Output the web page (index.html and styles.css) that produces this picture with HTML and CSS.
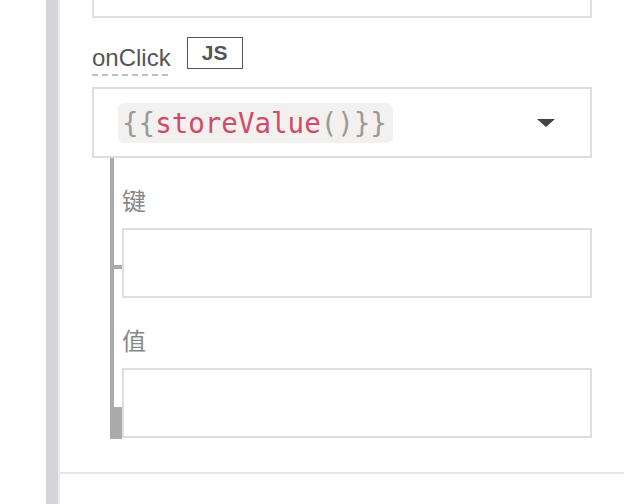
FILE: index.html
```html
<!DOCTYPE html>
<html lang="zh">
<head>
<meta charset="utf-8">
<link rel="stylesheet" href="styles.css">
</head>
<body>
<div class="page">
  <div class="rail"></div>
  <div class="panel">
    <div class="section">
      <div class="prev-box"></div>
      <div class="field-head">
        <span class="field-label">onClick</span>
        <span class="js-btn">JS</span>
      </div>
      <div class="dropdown">
        <span class="code"><span class="brace">{{</span><span class="fn">storeValue</span><span class="brace">()}}</span></span>
        <span class="caret"></span>
      </div>
      <div class="params">
        <div class="param param-key">
          <div class="param-label">键</div>
          <div class="param-input"></div>
        </div>
        <div class="param param-value">
          <div class="param-label">值</div>
          <div class="param-input"></div>
        </div>
      </div>
    </div>
  </div>
</div>
</body>
</html>
```

FILE: styles.css
```css
html, body {
  margin: 0;
  padding: 0;
  background: #ffffff;
}

.page {
  display: flex;
  width: 634px;
  height: 504px;
  overflow: hidden;
}

.rail {
  width: 12px;
  margin-left: 46px;
  background: #d4d4d9;
  border-right: 2px solid #ebebeb;
  flex-shrink: 0;
}

.panel {
  width: 564px;
  flex-shrink: 0;
}

.section {
  padding: 0 32px 34px 32px;
  border-bottom: 2px solid #e6e6e6;
}

.prev-box {
  height: 30px;
  margin-top: -16px;
  width: 496px;
  border: 2px solid #dedede;
}

.field-head {
  display: flex;
  align-items: flex-start;
  gap: 16px;
  margin-top: 19px;
  height: 38px;
}

.field-label {
  margin-top: 7px;
  font-family: "Liberation Sans", Arial, sans-serif;
  font-size: 24px;
  line-height: 28px;
  color: #555555;
  padding-bottom: 2px;
  background-image: repeating-linear-gradient(to right, #b7c0cb 0, #b7c0cb 6px, transparent 6px, transparent 10px);
  background-size: 100% 2px;
  background-repeat: no-repeat;
  background-position: left bottom;
  height: 30px;
}

.js-btn {
  width: 54px;
  height: 30px;
  border: 1px solid #555555;
  display: flex;
  align-items: center;
  justify-content: center;
  font-family: "Liberation Sans", Arial, sans-serif;
  font-weight: bold;
  font-size: 21px;
  color: #555555;
}

.dropdown {
  margin-top: 12px;
  width: 472px;
  height: 67px;
  border: 2px solid #dedede;
  display: flex;
  align-items: center;
  padding-left: 24px;
}

.code {
  background: #f2f1ef;
  border-radius: 6px;
  height: 40px;
  line-height: 40px;
  padding: 0 6px 0 4px;
  font-family: "DejaVu Sans Mono", monospace;
  font-size: 27.5px;
}

.brace {
  color: #9a9a9a;
}

.fn {
  color: #cf4c66;
}

.caret {
  margin-left: auto;
  margin-right: 35px;
  width: 0;
  height: 0;
  border-left: 9px solid transparent;
  border-right: 9px solid transparent;
  border-top: 8px solid #444444;
}

.params {
  margin-left: 18px;
  border-left: 4px solid #aaaaaa;
  padding-left: 8px;
}

.param {
  position: relative;
}

.param-label {
  padding-top: 24px;
  margin-bottom: 10px;
  font-family: "Noto Sans CJK SC", sans-serif;
  font-size: 24px;
  line-height: 36px;
  height: 36px;
  color: #888888;
}

.param-input {
  height: 66px;
  border: 2px solid #dedede;
}

.param-key .param-input {
  position: relative;
}

.param-key .param-input::before {
  content: "";
  position: absolute;
  left: -10px;
  top: 35px;
  width: 8px;
  height: 4px;
  background: #aaaaaa;
}

.param-value::after {
  content: "";
  position: absolute;
  left: -12px;
  bottom: -1px;
  width: 12px;
  height: 32px;
  background: #aaaaaa;
}
```
